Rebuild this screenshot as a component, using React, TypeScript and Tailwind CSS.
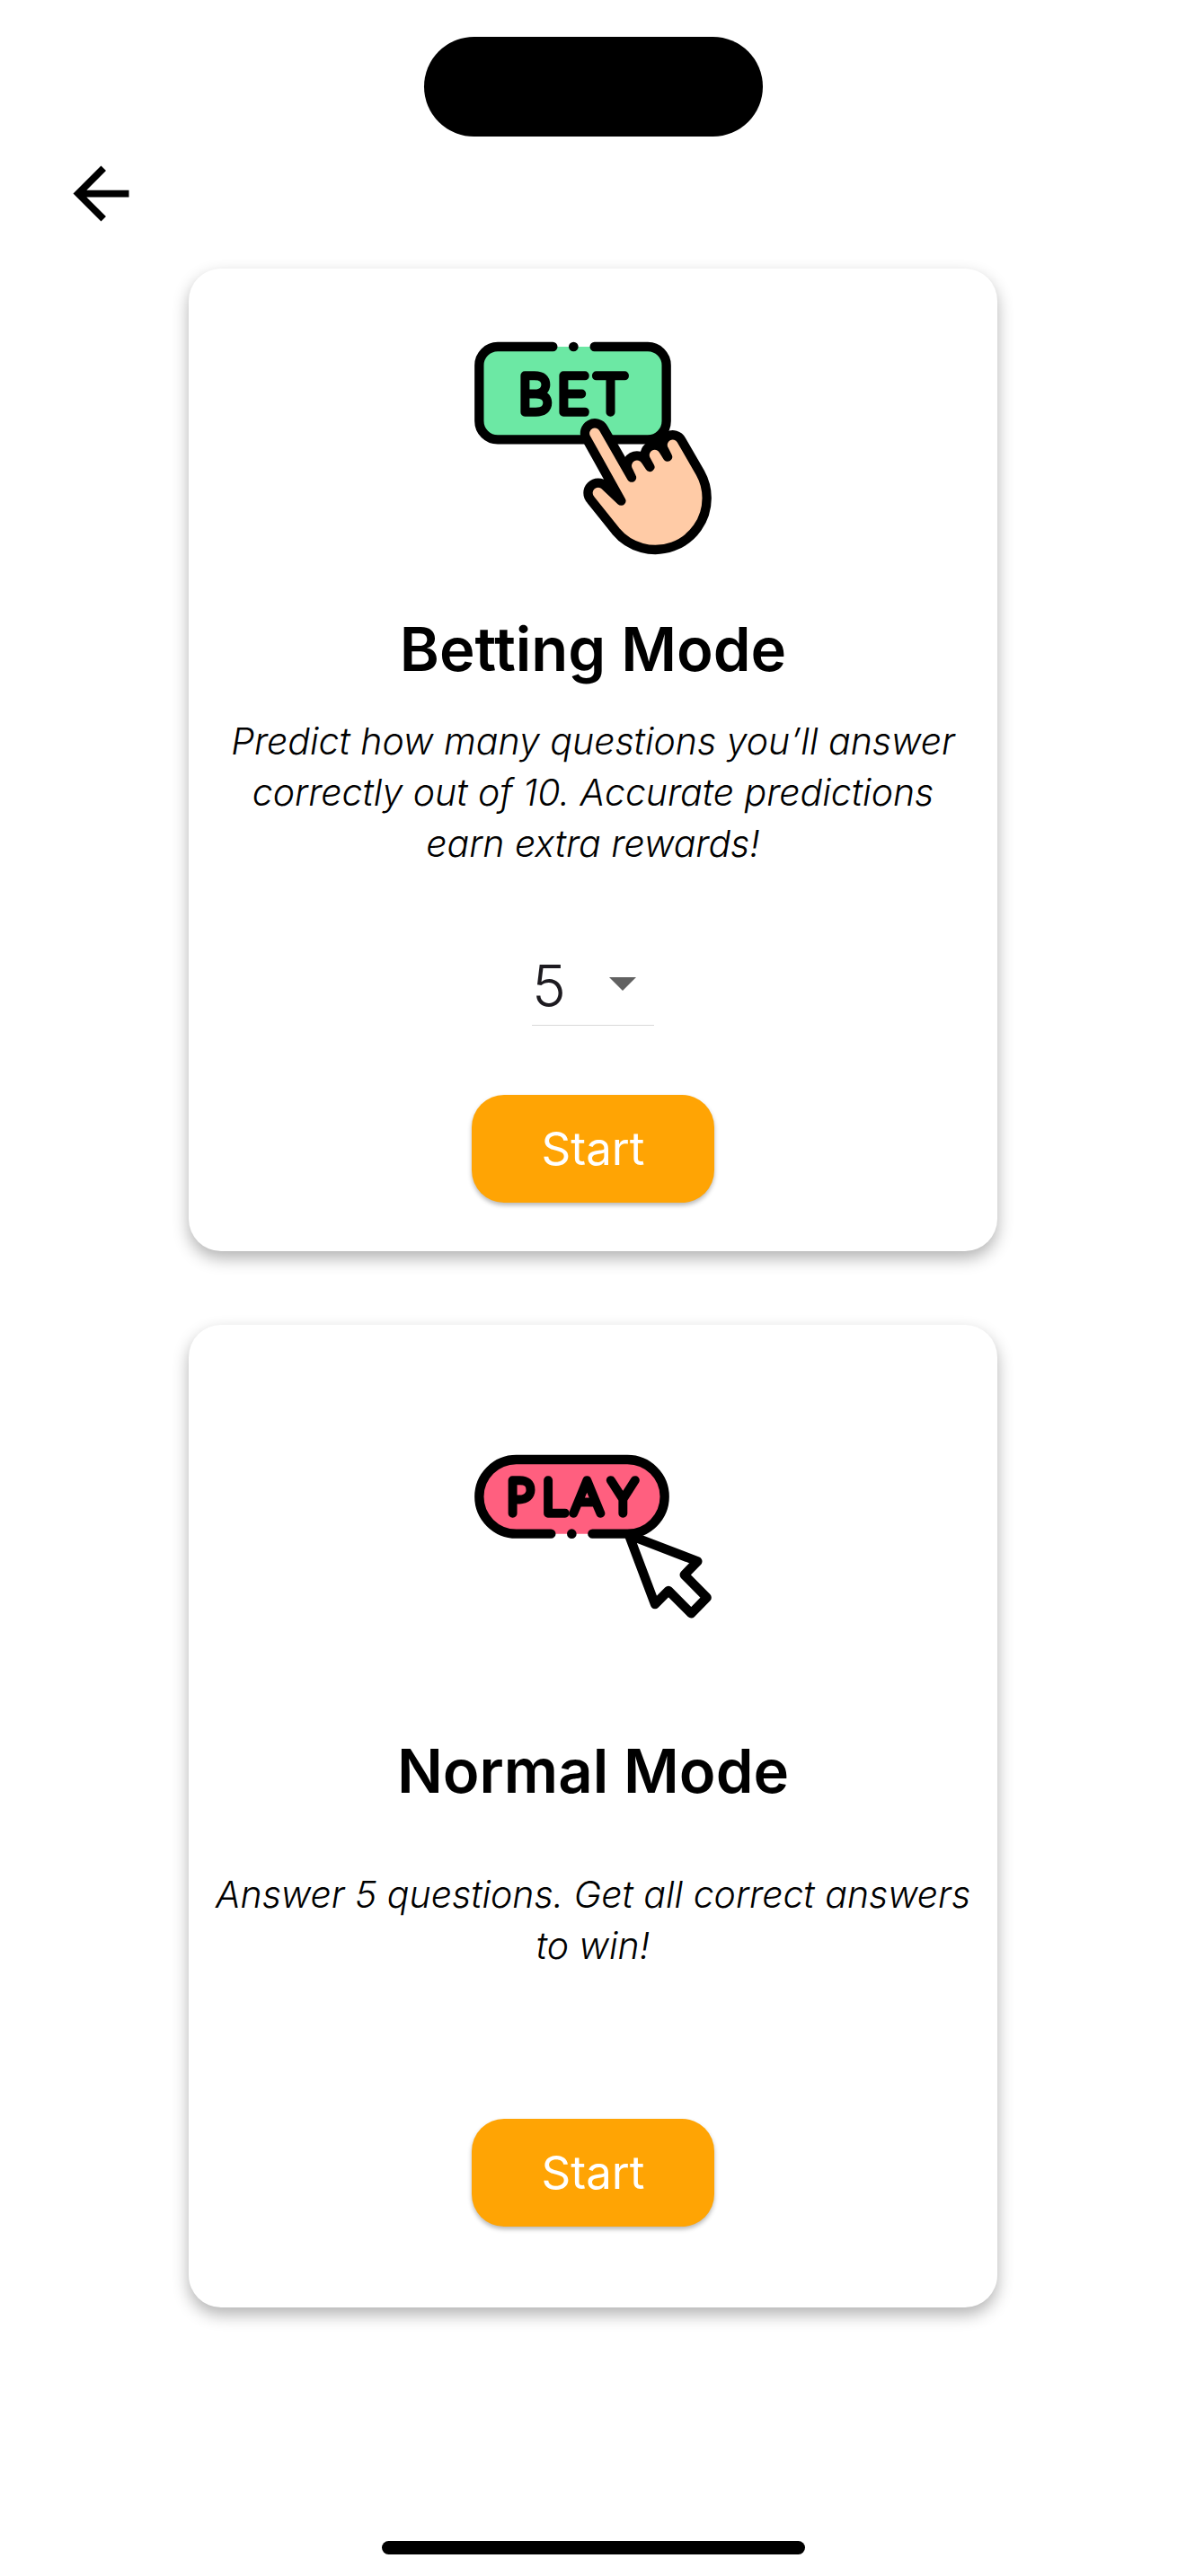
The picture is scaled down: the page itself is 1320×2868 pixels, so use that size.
import { useState, type ReactNode } from "react";
import { MdArrowBack } from "react-icons/md";

function BetIcon() {
  return (
    <svg viewBox="84 19 792 792" className="size-66" role="img" aria-label="Bet">
      <rect x="100" y="76" width="625" height="310" rx="62" fill="#6ce8a4" />
      <g stroke="#000" strokeWidth="31" strokeLinecap="round" strokeLinejoin="round">
        <path
          fill="none"
          d="M346 76H162a62 62 0 0 0-62 62V324a62 62 0 0 0 62 62H663a62 62 0 0 0 62-62V138a62 62 0 0 0-62-62H485"
        />
        <path
          fill="#ffcba6"
          d="M574 591L457 381A33 33 0 0 1 515 349L609 513L598 490A33 33 0 0 1 656 457L670 478L657 454A33 33 0 0 1 715 422L729 444L717 420A33 33 0 0 1 775 388L838 497A172 172 0 0 1 860 582A172 172 0 0 1 556 692L473 588A33 33 0 0 1 521 541Z"
        />
      </g>
      <circle cx="415" cy="76" r="16" />
      <text
        y="294"
        fontSize="176"
        textAnchor="middle"
        stroke="#000"
        strokeWidth="28"
        strokeLinejoin="round"
        className="font-['Lato',sans-serif] font-thin"
      >
        <tspan x="286">B</tspan>
        <tspan x="412">E</tspan>
        <tspan x="538">T</tspan>
      </text>
    </svg>
  );
}

function PlayIcon() {
  return (
    <svg viewBox="84 -33 792 792" className="size-66" role="img" aria-label="Play">
      <rect x="100" y="105" width="619" height="248" rx="124" fill="#ff5f7f" />
      <g stroke="#000" strokeWidth="31" strokeLinecap="round" strokeLinejoin="round">
        <path fill="#fff" d="M600 357L829 445L785 490L860 566L808 619L732 543L687 588Z" />
        <path
          fill="none"
          d="M340 353H224a124 124 0 0 1 0-248H595a124 124 0 0 1 0 248H478"
        />
      </g>
      <circle cx="409" cy="353" r="16" />
      <text
        y="285"
        fontSize="156"
        textAnchor="middle"
        stroke="#000"
        strokeWidth="28"
        strokeLinejoin="round"
        className="font-['Lato',sans-serif] font-thin"
      >
        <tspan x="236">P</tspan>
        <tspan x="350">L</tspan>
        <tspan x="460">A</tspan>
        <tspan x="580">Y</tspan>
      </text>
    </svg>
  );
}

function Card({ className, children }: { className: string; children: ReactNode }) {
  return (
    <section
      className={`flex w-full max-w-[900px] flex-col items-center rounded-[36px] bg-white px-6 shadow-[0_8px_18px_rgba(0,0,0,0.3)] ${className}`}
    >
      {children}
    </section>
  );
}

function Title({ className, children }: { className: string; children: ReactNode }) {
  return <h2 className={`text-center text-[67px] leading-[80px] font-semibold ${className}`}>{children}</h2>;
}

function Description({ className, children }: { className: string; children: ReactNode }) {
  return <p className={`text-center text-[41px] leading-[57px] font-light italic ${className}`}>{children}</p>;
}

function StartButton({ className }: { className: string }) {
  return (
    <button
      type="button"
      className={`h-[120px] w-[270px] rounded-[36px] bg-[#ffa404] text-[51px] text-white shadow-[0_3px_5px_rgba(0,0,0,0.28)] ${className}`}
    >
      Start
    </button>
  );
}

export default function App() {
  const [prediction, setPrediction] = useState("5");

  return (
    <main className="flex min-h-screen flex-col items-center bg-white font-['Inter',sans-serif] text-black">
      <div className="mt-[41px] h-[111px] w-[377px] shrink-0 rounded-[56px] bg-black" />
      <header className="mt-[17px] w-full px-[66px]">
        <button type="button" aria-label="Back" className="block">
          <MdArrowBack className="size-[93px]" />
        </button>
      </header>

      <div className="mt-[37px] flex w-full flex-col items-center gap-[82px] px-6">
        <Card className="pt-[68px] pb-[54px]">
          <BetIcon />
          <Title className="mt-[52px]">Betting Mode</Title>
          <Description className="mt-[34px]">
            Predict how many questions you’ll answer correctly out of 10. Accurate predictions earn extra rewards!
          </Description>
          <div className="relative mt-[82px]">
            <select
              aria-label="Predicted correct answers"
              value={prediction}
              onChange={(e) => setPrediction(e.target.value)}
              className="block h-[92px] w-[136px] appearance-none border-b border-[#d8d8d8] bg-transparent pb-1 text-[64px] font-light text-[#1d1b20] outline-none"
            >
              {["1", "2", "3", "4", "5", "6", "7", "8", "9", "10"].map((n) => (
                <option key={n}>{n}</option>
              ))}
            </select>
            <svg
              viewBox="0 0 30 15"
              className="pointer-events-none absolute top-[38px] right-5 h-[15px] w-[30px]"
              aria-hidden="true"
            >
              <path d="M0 0H30L15 15Z" fill="#616161" />
            </svg>
          </div>
          <StartButton className="mt-[77px]" />
        </Card>

        <Card className="pt-[104px] pb-[90px]">
          <PlayIcon />
          <Title className="mt-[89px]">Normal Mode</Title>
          <Description className="mt-[69px]">
            Answer 5 questions. Get all correct answers to win!
          </Description>
          <StartButton className="mt-[164px]" />
        </Card>
      </div>

      <div className="mt-auto mb-6 h-[15px] w-[471px] shrink-0 rounded-full bg-black" />
    </main>
  );
}
